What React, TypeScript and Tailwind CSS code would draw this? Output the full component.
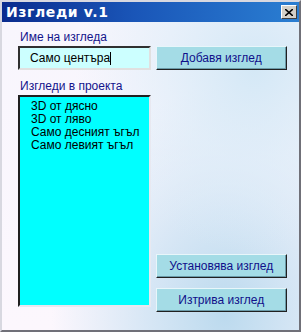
const listItems = ["3D от дясно", "3D от ляво", "Само десният ъгъл", "Само левият ъгъл"];

function WinButton({ label }: { label: string }) {
  return (
    <button className="h-[24px] w-full bg-[#a4dce6] text-[12px] text-[#10108a] border border-t-[#e8f6fa] border-l-[#e8f6fa] border-r-[#202020] border-b-[#202020] shadow-[inset_-1px_-1px_0_#6a9aa8]">
      {label}
    </button>
  );
}

export default function App() {
  return (
    <div
      className="w-[301px] h-[332px] flex flex-col bg-[#c8c8d0] border-2 border-t-[#d8d8e0] border-l-[#d8d8e0] border-r-[#707078] border-b-[#707078] overflow-hidden"
      style={{ fontFamily: '"Liberation Sans", Arial, sans-serif' }}
    >
      {/* Title bar */}
      <div className="h-[20px] flex items-center justify-between pl-[4px] pr-[2px] bg-[linear-gradient(90deg,#0a2c8e_0%,#1a56b8_45%,#2a7ed2_100%)]">
        <span className="text-white font-bold text-[14px] tracking-[0.6px]" style={{ fontFamily: '"DejaVu Sans", sans-serif' }}>
          Изгледи v.1
        </span>
        <div className="w-[16px] h-[14px] bg-[#d4d0c8] border border-t-white border-l-white border-r-[#404040] border-b-[#404040] flex items-center justify-center">
          <svg width="8" height="7" viewBox="0 0 8 7">
            <path d="M0 0 L8 7 M8 0 L0 7" stroke="#000" strokeWidth="1.6" />
          </svg>
        </div>
      </div>

      {/* Body */}
      <div className="flex-1 flex gap-[5px] pl-[16px] pr-[12px] pt-[8px] pb-[23px] bg-[radial-gradient(ellipse_at_85%_15%,#d4e8f6_0%,rgba(220,236,248,0.6)_25%,rgba(250,246,252,0)_50%),radial-gradient(ellipse_at_75%_95%,#bcdaee_0%,rgba(200,224,242,0.7)_25%,rgba(250,246,252,0)_55%),linear-gradient(180deg,#f8f6fd,#fcf7fd)]">
        {/* Left column */}
        <div className="w-[133px] flex flex-col">
          <span className="text-[12px] text-[#14148c] leading-[14px] pl-[2px]">Име на изгледа</span>
          <div className="mt-[2px] h-[24px] bg-[#ccffff] border-2 border-t-[#303030] border-l-[#303030] border-r-[#e0e0e0] border-b-[#e0e0e0] flex items-center pl-[10px] text-[12px] text-black">
            Само центъра<span className="w-px h-[13px] bg-black" />
          </div>
          <span className="mt-[9px] text-[12px] text-[#14148c] leading-[14px] pl-[2px]">Изгледи в проекта</span>
          <div className="mt-[2px] flex-1 bg-[#00ffff] border-2 border-t-[#202020] border-l-[#202020] border-r-[#e8e8f0] border-b-[#e8e8f0] pl-[11px] pt-[3px] flex flex-col">
            {listItems.map((t) => (
              <span key={t} className="text-[12px] leading-[13px] text-black">
                {t}
              </span>
            ))}
          </div>
        </div>

        {/* Right column */}
        <div className="w-[132px] flex flex-col pt-[16px]">
          <WinButton label="Добавя изглед" />
          <div className="mt-auto flex flex-col gap-[10px] -mb-[5px]">
            <WinButton label="Установява изглед" />
            <WinButton label="Изтрива изглед" />
          </div>
        </div>
      </div>
    </div>
  );
}
